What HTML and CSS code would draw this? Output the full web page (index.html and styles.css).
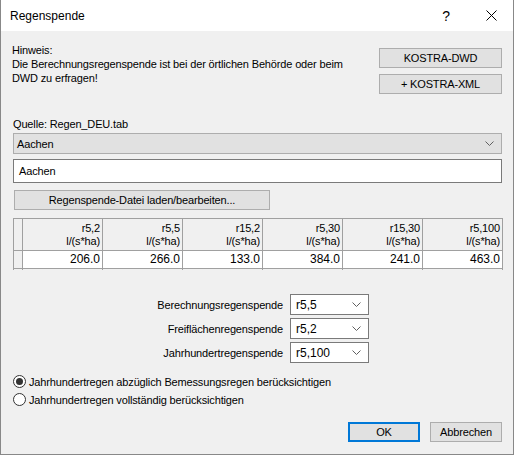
FILE: index.html
```html
<!DOCTYPE html>
<html lang="de">
<head>
<meta charset="UTF-8">
<title>Regenspende</title>
<link rel="stylesheet" href="styles.css">
</head>
<body>

<div class="window">
    <div class="titlebar">
        <span class="title">Regenspende</span>
        <span class="help">?</span>
        <svg class="close" width="11" height="11" viewBox="0 0 11 11">
            <path d="M0.5 0.5 L10.5 10.5 M10.5 0.5 L0.5 10.5" stroke="#000" stroke-width="1" fill="none"/>
        </svg>
    </div>

    <div class="content">
        <div class="top">
            <div class="hint">
                Hinweis:<br>
                Die Berechnungsregenspende ist bei der örtlichen Behörde oder beim<br>
                DWD zu erfragen!
            </div>
            <div class="side-buttons">
                <div class="btn">KOSTRA-DWD</div>
                <div class="btn">+ KOSTRA-XML</div>
            </div>
        </div>

        <div class="source">Quelle: Regen_DEU.tab</div>

        <div class="combo">
            <span>Aachen</span>
            <svg width="9" height="5" viewBox="0 0 9 5"><path d="M0.5 0.5 L4.5 4.5 L8.5 0.5" stroke="#606060" fill="none"/></svg>
        </div>

        <div class="textbox">Aachen</div>

        <div class="btn load-btn">Regenspende-Datei laden/bearbeiten...</div>

        <div class="grid">
            <div class="cell rowhead head"></div>
            <div class="cell head">r5,2<br>l/(s*ha)</div>
            <div class="cell head">r5,5<br>l/(s*ha)</div>
            <div class="cell head">r15,2<br>l/(s*ha)</div>
            <div class="cell head">r5,30<br>l/(s*ha)</div>
            <div class="cell head">r15,30<br>l/(s*ha)</div>
            <div class="cell head">r5,100<br>l/(s*ha)</div>

            <div class="cell rowhead data"></div>
            <div class="cell data">206.0</div>
            <div class="cell data">266.0</div>
            <div class="cell data">133.0</div>
            <div class="cell data">384.0</div>
            <div class="cell data">241.0</div>
            <div class="cell data">463.0</div>

            <div class="cell rowhead rest"></div>
            <div class="cell rest"></div>
            <div class="cell rest"></div>
            <div class="cell rest"></div>
            <div class="cell rest"></div>
            <div class="cell rest"></div>
            <div class="cell rest"></div>
        </div>

        <div class="params">
            <label>Berechnungsregenspende</label>
            <div class="select"><span>r5,5</span><svg width="9" height="5" viewBox="0 0 9 5"><path d="M0.5 0.5 L4.5 4.5 L8.5 0.5" stroke="#606060" fill="none"/></svg></div>
            <label>Freiflächenregenspende</label>
            <div class="select"><span>r5,2</span><svg width="9" height="5" viewBox="0 0 9 5"><path d="M0.5 0.5 L4.5 4.5 L8.5 0.5" stroke="#606060" fill="none"/></svg></div>
            <label>Jahrhundertregenspende</label>
            <div class="select"><span>r5,100</span><svg width="9" height="5" viewBox="0 0 9 5"><path d="M0.5 0.5 L4.5 4.5 L8.5 0.5" stroke="#606060" fill="none"/></svg></div>
        </div>

        <div class="radios">
            <div class="radio checked"><span class="dot"></span>Jahrhundertregen abzüglich Bemessungsregen berücksichtigen</div>
            <div class="radio"><span class="dot"></span>Jahrhundertregen vollständig berücksichtigen</div>
        </div>

        <div class="footer">
            <div class="btn ok">OK</div>
            <div class="btn">Abbrechen</div>
        </div>
    </div>
</div>

</body>
</html>
```

FILE: styles.css
```css
body {
    margin: 0;
    font-family: "Liberation Sans", Arial, sans-serif;
    font-size: 11px;
    letter-spacing: -0.15px;
    color: #000;
    background-color: #f0f0f0;
}
.window {
    width: 514px;
    height: 455px;
    box-sizing: border-box;
    border: 1px solid #888;
    border-top: none;
    background-color: #f0f0f0;
}
.titlebar {
    height: 31px;
    background-color: #fff;
    display: flex;
    align-items: center;
    padding: 0 16px 0 9px;
    letter-spacing: 0;
}
.title {
    font-size: 12px;
    flex: 1;
}
.help {
    font-size: 14px;
    margin-right: 36px;
}
.content {
    padding: 12px 11px 0 11px;
}
.top {
    display: flex;
    justify-content: space-between;
    height: 68px;
}
.hint {
    line-height: 14px;
}
.side-buttons {
    display: flex;
    flex-direction: column;
    gap: 6px;
    margin-top: 5px;
}
.btn {
    box-sizing: border-box;
    height: 20px;
    line-height: 18px;
    text-align: center;
    background-color: #e1e1e1;
    border: 1px solid #adadad;
}
.side-buttons .btn {
    width: 123px;
}
.source {
    height: 14px;
    line-height: 14px;
    margin: 6px 0 2px 1px;
}
.combo {
    box-sizing: border-box;
    height: 21px;
    margin-left: 1px;
    background-color: #e1e1e1;
    border: 1px solid #adadad;
    display: flex;
    justify-content: space-between;
    align-items: center;
    padding: 0 7px 0 3px;
}
.textbox {
    box-sizing: border-box;
    height: 24px;
    line-height: 22px;
    margin: 5px 0 0 1px;
    background-color: #fff;
    border: 1px solid #7a7a7a;
    padding: 0 5px;
}
.load-btn {
    width: 256px;
    margin: 7px 0 0 2px;
}
.grid {
    margin: 8px 0 0 1px;
    width: 490px;
    height: 52px;
    box-sizing: border-box;
    overflow: hidden;
    display: grid;
    grid-template-columns: 9px repeat(6, 80px);
    grid-template-rows: 32px 18px 10px;
    border-top: 1px solid #a0a0a0;
    border-left: 1px solid #a0a0a0;
}
.cell {
    box-sizing: border-box;
    border-right: 1px solid #a0a0a0;
    border-bottom: 1px solid #a0a0a0;
    text-align: right;
    padding-right: 2px;
}
.cell.head {
    background-color: #f0f0f0;
    line-height: 13px;
    padding-top: 3px;
}
.cell.data {
    background-color: #fff;
    font-size: 12px;
    line-height: 16px;
    letter-spacing: 0;
}
.cell.rowhead {
    background-color: #f0f0f0;
}
.cell.rest {
    border-bottom: none;
}
.params {
    display: grid;
    grid-template-columns: 271px 79px;
    column-gap: 7px;
    row-gap: 3px;
    margin-top: 24px;
    align-items: center;
}
.params label {
    text-align: right;
}
.select {
    box-sizing: border-box;
    height: 21px;
    background-color: #fff;
    border: 1px solid #7a7a7a;
    display: flex;
    justify-content: space-between;
    align-items: center;
    padding: 0 7px 0 5px;
    font-size: 12px;
    letter-spacing: 0;
}
.radios {
    margin-top: 12px;
    display: flex;
    flex-direction: column;
    gap: 5px;
}
.radio {
    display: flex;
    align-items: center;
    height: 13px;
    margin-left: 1px;
}
.radio .dot {
    box-sizing: border-box;
    width: 13px;
    height: 13px;
    border: 1px solid #333;
    border-radius: 50%;
    background-color: #fff;
    margin-right: 3px;
    display: flex;
    align-items: center;
    justify-content: center;
}
.radio.checked .dot::after {
    content: "";
    width: 7px;
    height: 7px;
    border-radius: 50%;
    background-color: #333;
}
.footer {
    display: flex;
    justify-content: flex-end;
    gap: 10px;
    margin-top: 16px;
}
.footer .btn {
    width: 72px;
    height: 20px;
}
.footer .btn.ok {
    border: 2px solid #0078d7;
    line-height: 16px;
}
```
